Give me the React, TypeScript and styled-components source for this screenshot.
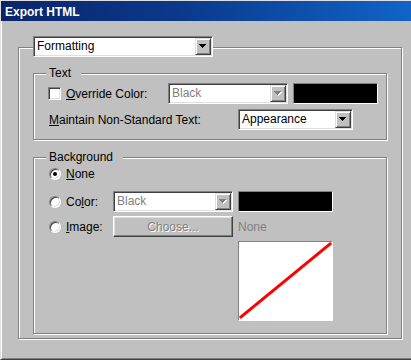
import styled, { createGlobalStyle } from "styled-components";

const GlobalStyle = createGlobalStyle`
  html, body {
    margin: 0;
    padding: 0;
    background: #c0c0c0;
  }
  body {
    font-family: "Liberation Sans", Arial, sans-serif;
    font-size: 12px;
    color: #000;
  }
`;

const Window = styled.div`
  width: 411px;
  height: 360px;
  box-sizing: border-box;
  background: #c0c0c0;
  border-top: 1px solid #dfdfdf;
  border-left: 1px solid #dfdfdf;
  border-bottom: 1px solid #404040;
  box-shadow: inset 1px 0 0 #fff, inset 0 -1px 0 #808080;
  display: flex;
  flex-direction: column;
  overflow: hidden;
`;

const TitleBar = styled.div`
  height: 20px;
  line-height: 22px;
  padding-left: 4px;
  overflow: hidden;
  background: linear-gradient(90deg, #0a246a 0%, #0b3a8c 45%, #1064c8 100%);
  color: #fff;
  font-weight: bold;
  font-size: 12px;
`;

const Body = styled.div`
  padding: 26px 0 0 17px;
`;

const GroupBox = styled.div<{ $gap?: number }>`
  display: flex;
  flex-direction: column;
  box-sizing: border-box;
  border: 1px solid #808080;
  box-shadow: 1px 1px 0 #fff, inset 1px 1px 0 #fff;
  margin-top: ${(p) => p.$gap ?? 0}px;
`;

const OuterGroup = styled(GroupBox)`
  width: 384px;
  padding: 0 14px 4px 14px;
`;

const Caption = styled.div`
  align-self: flex-start;
  margin: -8px 0 0 12px;
  padding: 0 10px 0 3px;
  line-height: 14px;
  background: #c0c0c0;
`;

const TextGroup = styled(GroupBox)`
  padding-bottom: 9px;
`;

const BackgroundGroup = styled(GroupBox)`
  padding-bottom: 12px;
`;

const Row = styled.div<{ $top: number; $indent: number }>`
  display: flex;
  align-items: center;
  height: 21px;
  margin: ${(p) => p.$top}px 0 0 ${(p) => p.$indent}px;
`;

const Label = styled.span<{ $w?: number; $lead?: number }>`
  display: inline-block;
  width: ${(p) => (p.$w ? `${p.$w}px` : "auto")};
  margin-left: ${(p) => p.$lead ?? 0}px;
  white-space: nowrap;
  line-height: 14px;
`;

const Key = styled.span`
  text-decoration: underline;
  text-underline-offset: 1px;
`;

const Combo = styled.div<{ $w: number; $lift?: number }>`
  width: ${(p) => p.$w}px;
  height: 21px;
  box-sizing: border-box;
  display: flex;
  flex-shrink: 0;
  padding: 1px;
  margin-top: ${(p) => (p.$lift ? -p.$lift : 0)}px;
  background: #fff;
  border: 1px solid;
  border-color: #808080 #fff #fff #808080;
  box-shadow: inset 1px 1px 0 #404040, inset -1px -1px 0 #dfdfdf;
`;

const ComboText = styled.div<{ $disabled?: boolean }>`
  flex: 1;
  padding-left: 2px;
  line-height: 17px;
  color: ${(p) => (p.$disabled ? "#808080" : "#000")};
  white-space: nowrap;
  overflow: hidden;
`;

const ArrowButton = styled.div`
  width: 16px;
  height: 17px;
  box-sizing: border-box;
  display: flex;
  align-items: center;
  justify-content: center;
  background: #c0c0c0;
  border: 1px solid;
  border-color: #dfdfdf #404040 #404040 #dfdfdf;
  box-shadow: inset 1px 1px 0 #fff, inset -1px -1px 0 #808080;
`;

const Swatch = styled.div<{ $w: number; $lead?: number }>`
  width: ${(p) => p.$w}px;
  height: 21px;
  box-sizing: border-box;
  flex-shrink: 0;
  margin-left: ${(p) => p.$lead ?? 0}px;
  background: #000;
  border: 1px solid;
  border-color: #808080 #fff #fff #808080;
`;

const CheckBox = styled.div`
  width: 13px;
  height: 13px;
  box-sizing: border-box;
  flex-shrink: 0;
  background: #fff;
  border: 1px solid;
  border-color: #808080 #fff #fff #808080;
  box-shadow: inset 1px 1px 0 #404040, inset -1px -1px 0 #dfdfdf;
`;

const Radio = styled.div<{ $checked?: boolean }>`
  width: 12px;
  height: 12px;
  box-sizing: border-box;
  flex-shrink: 0;
  display: flex;
  align-items: center;
  justify-content: center;
  border-radius: 50%;
  background: #fff;
  border: 1px solid;
  border-color: #808080 #fff #fff #808080;
  box-shadow: inset 1px 1px 0 #404040, inset -1px -1px 0 #dfdfdf;

  &::after {
    content: "";
    display: ${(p) => (p.$checked ? "block" : "none")};
    width: 4px;
    height: 4px;
    border-radius: 50%;
    background: #000;
  }
`;

const BgGrid = styled.div`
  display: grid;
  grid-template-columns: 59px 120px 95px;
  grid-template-rows: 22px 21px 21px 80px;
  column-gap: 5px;
  row-gap: 4px;
  margin: 1px 0 0 15px;
`;

const RadioCell = styled.div<{ $short?: boolean }>`
  display: flex;
  align-items: center;
  gap: 5px;
  height: ${(p) => (p.$short ? "18px" : "21px")};
  align-self: start;
  white-space: nowrap;
`;

const PushButton = styled.div`
  box-sizing: border-box;
  height: 21px;
  display: flex;
  align-items: center;
  justify-content: center;
  background: #c0c0c0;
  border: 1px solid;
  border-color: #fff #404040 #404040 #fff;
  box-shadow: inset -1px -1px 0 #808080, inset 1px 1px 0 #dfdfdf;
  color: #808080;
  text-shadow: 1px 1px 0 #fff;
`;

const GrayText = styled.div`
  display: flex;
  align-items: center;
  color: #808080;
`;

const Preview = styled.div`
  grid-column: 3;
  box-sizing: border-box;
  width: 95px;
  height: 80px;
  background: #fff;
  border: 1px solid;
  border-color: #808080 #fff #fff #808080;
`;

const Arrow = ({ disabled }: { disabled?: boolean }) => (
  <svg width="8" height="5" viewBox="0 0 8 5" shapeRendering="crispEdges">
    {disabled && (
      <path d="M1 1h7v1H1z M2 2h5v1H2z M3 3h3v1H3z M4 4h1v1H4z" fill="#fff" />
    )}
    <path
      d="M0 0h7v1H0z M1 1h5v1H1z M2 2h3v1H2z M3 3h1v1H3z"
      fill={disabled ? "#808080" : "#000"}
    />
  </svg>
);

const DropDown = ({
  w,
  value,
  disabled,
  lift,
}: {
  w: number;
  value: string;
  disabled?: boolean;
  lift?: number;
}) => (
  <Combo $w={w} $lift={lift}>
    <ComboText $disabled={disabled}>{value}</ComboText>
    <ArrowButton>
      <Arrow disabled={disabled} />
    </ArrowButton>
  </Combo>
);

export default function App() {
  return (
    <>
      <GlobalStyle />
      <Window>
        <TitleBar>Export HTML</TitleBar>
        <Body>
          <OuterGroup>
            <DropDown w={180} value="Formatting" lift={12} />

            <TextGroup $gap={16}>
              <Caption>Text</Caption>
              <Row $top={3} $indent={14}>
                <CheckBox />
                <Label $w={102} $lead={5}>
                  <Key>O</Key>verride Color:
                </Label>
                <DropDown w={120} value="Black" disabled />
                <Swatch $w={85} $lead={5} />
              </Row>
              <Row $top={5} $indent={15}>
                <Label $w={189}>
                  <Key>M</Key>aintain Non-Standard Text:
                </Label>
                <DropDown w={115} value="Appearance" />
              </Row>
            </TextGroup>

            <BackgroundGroup $gap={17}>
              <Caption>Background</Caption>
              <BgGrid>
                <RadioCell $short>
                  <Radio $checked />
                  <span>
                    <Key>N</Key>one
                  </span>
                </RadioCell>
                <div />
                <div />

                <RadioCell>
                  <Radio />
                  <span>
                    Co<Key>l</Key>or:
                  </span>
                </RadioCell>
                <DropDown w={120} value="Black" disabled />
                <Swatch $w={95} />

                <RadioCell>
                  <Radio />
                  <span>
                    <Key>I</Key>mage:
                  </span>
                </RadioCell>
                <PushButton>Choose...</PushButton>
                <GrayText>None</GrayText>

                <Preview>
                  <svg width="93" height="78" viewBox="0 0 93 78">
                    <line
                      x1="2"
                      y1="75"
                      x2="91"
                      y2="2"
                      stroke="#ff0000"
                      strokeWidth="3"
                      strokeLinecap="square"
                    />
                  </svg>
                </Preview>
              </BgGrid>
            </BackgroundGroup>
          </OuterGroup>
        </Body>
      </Window>
    </>
  );
}
